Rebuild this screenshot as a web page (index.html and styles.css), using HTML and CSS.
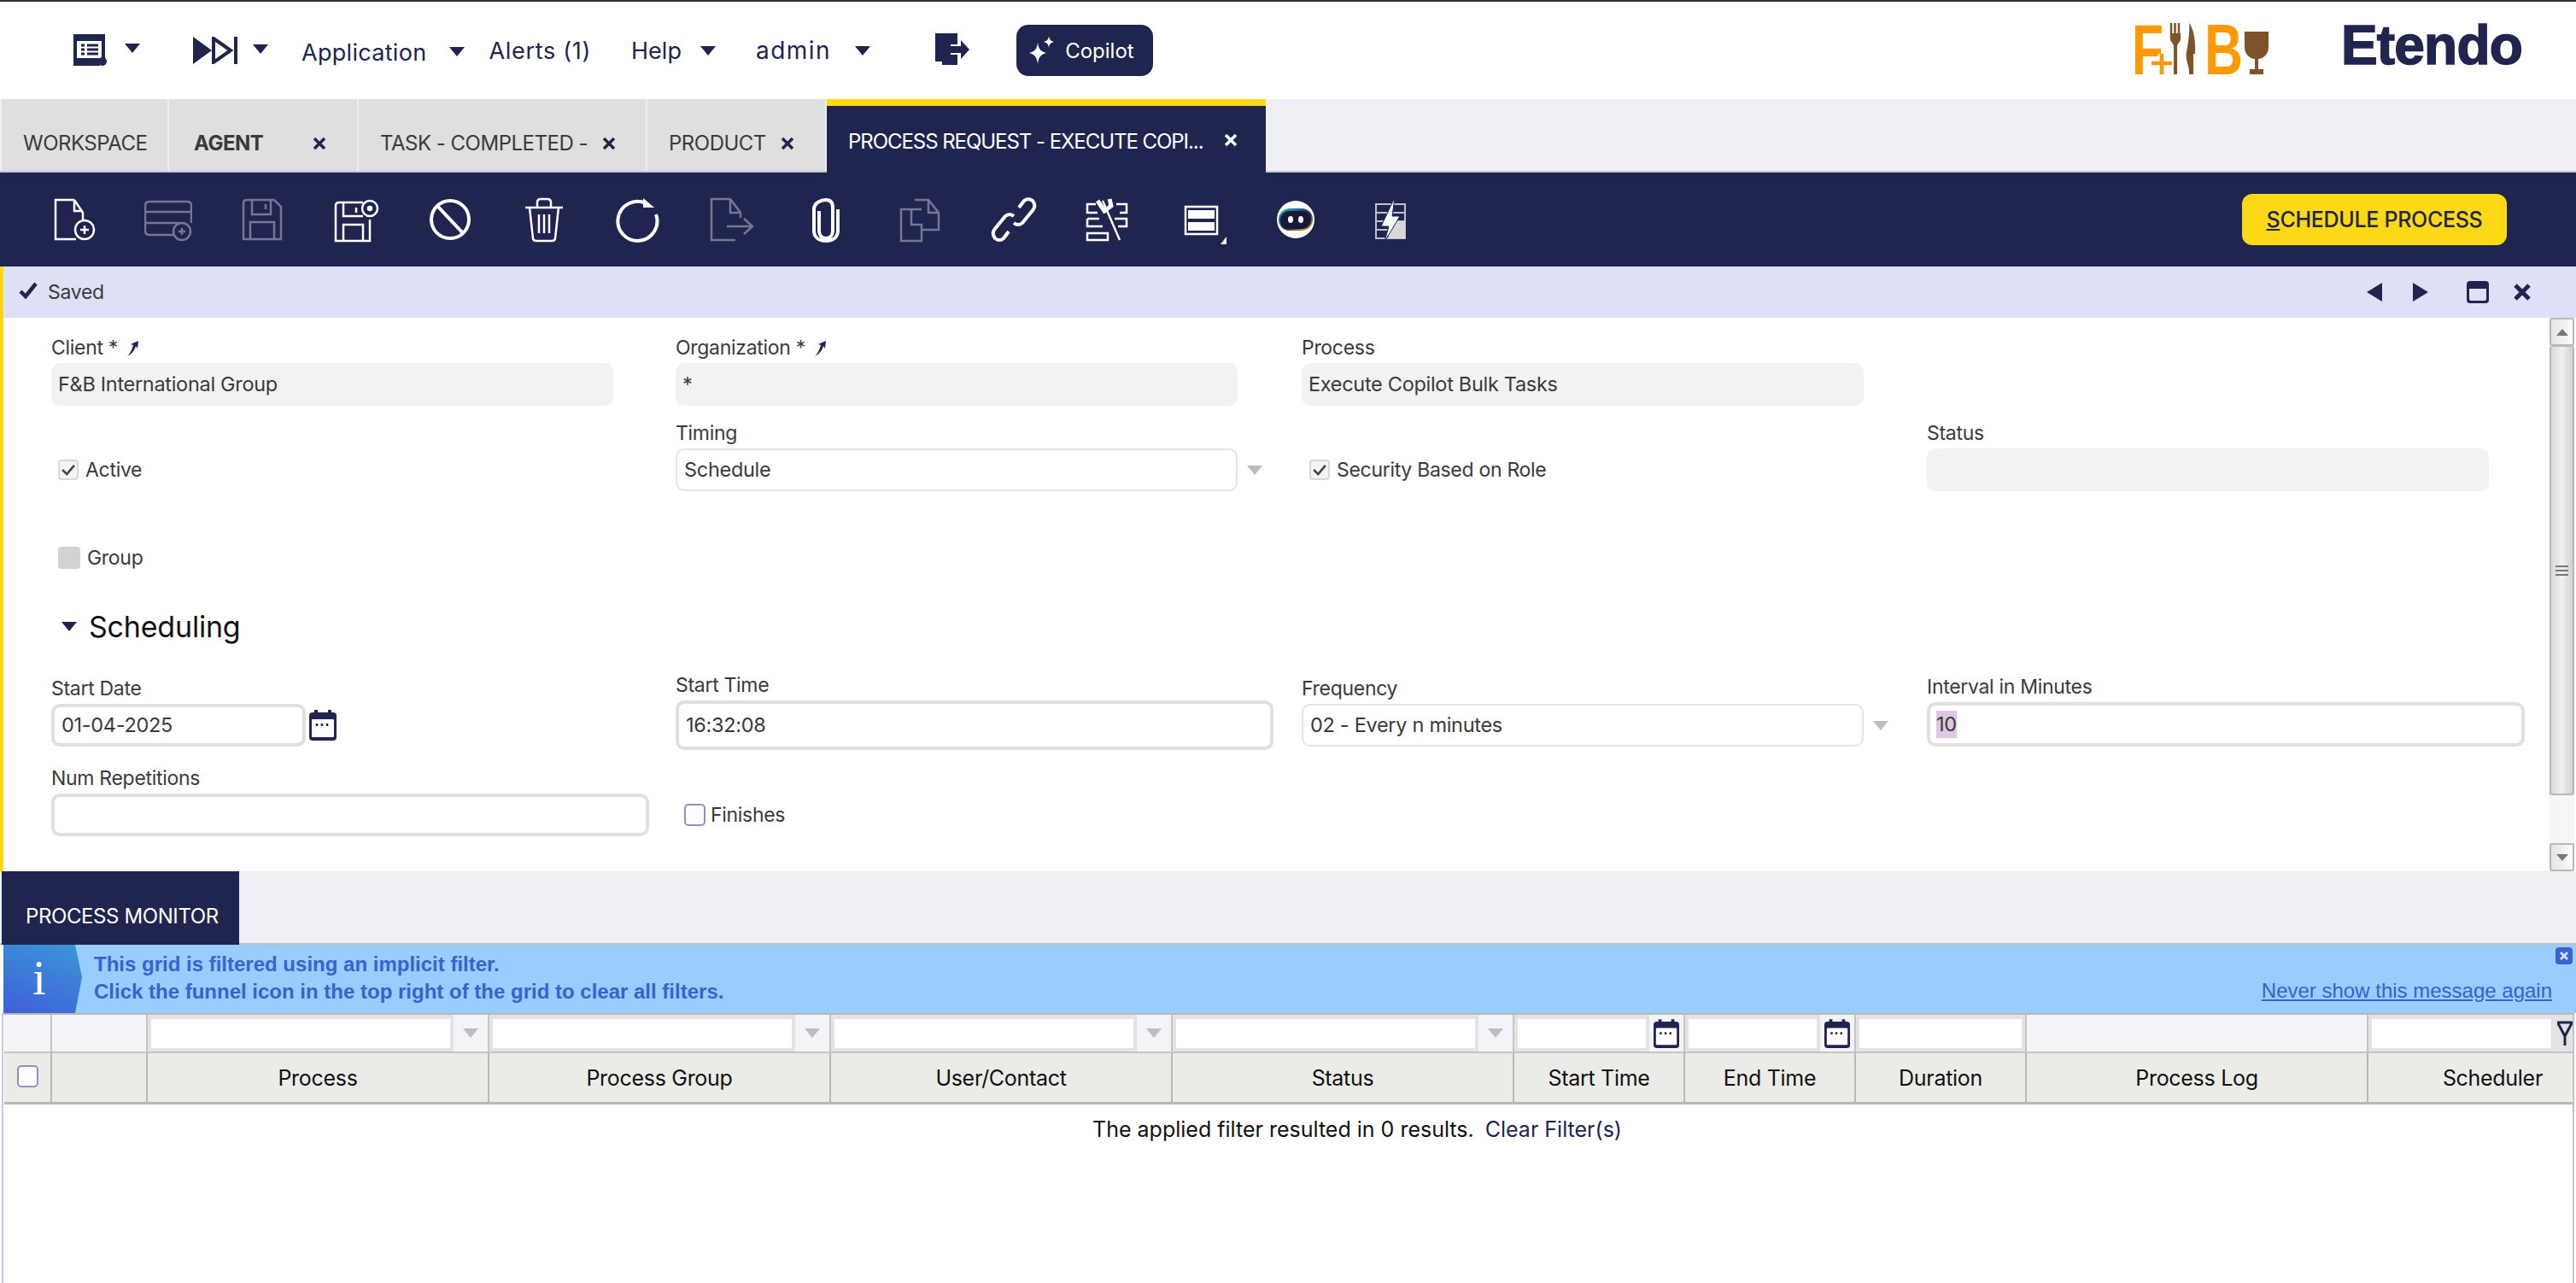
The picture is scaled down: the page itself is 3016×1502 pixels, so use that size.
FILE: index.html
```html
<!DOCTYPE html>
<html lang="en">
  <head>
    <meta charset="UTF-8" />
    <title>Process Request - Etendo</title>
    <link rel="stylesheet" href="styles.css">
  </head>
  <body>
    <header class="topbar">
      <svg class="ico-workspace" viewBox="0 0 44 40"><path d="M1 1H38V32H32V38H1Z" fill="#20254f"/><path d="M5 9H34V29H5Z" fill="#fff"/><path d="M10 14H14M17 14H30M10 19H14M17 19H30M10 24H14M17 24H30" stroke="#20254f" stroke-width="3"/><circle cx="35" cy="33" r="5" fill="#20254f"/></svg>
      <span class="arrow arrow-a"></span>
      <svg class="ico-skip" viewBox="0 0 54 32"><path d="M0 0L22 16L0 32Z" fill="#20254f"/><path d="M24 2L44 16L24 30Z" fill="none" stroke="#20254f" stroke-width="4"/><path d="M50 0V32" stroke="#20254f" stroke-width="4"/></svg>
      <span class="arrow arrow-b"></span>
      <span class="menu menu-app">Application</span>
      <span class="arrow arrow-c"></span>
      <span class="menu menu-alerts">Alerts (1)</span>
      <span class="menu menu-help">Help</span>
      <span class="arrow arrow-d"></span>
      <span class="menu menu-admin">admin</span>
      <span class="arrow arrow-e"></span>
      <svg class="ico-logout" viewBox="0 0 40 40"><path d="M0 1H26V14H18V26H26V38H8V34H0Z" fill="#20254f"/><path d="M18 16H30V9L40 20L30 31V24H18Z" fill="#20254f"/></svg>
      <button class="copilot">
        <svg viewBox="0 0 30 34"><path d="M10 8C11 15 13 18 20 20C13 22 11 25 10 33C9 25 7 22 0 20C7 18 9 15 10 8Z" fill="#fff"/><path d="M23 0C23.500 4 25 6 29 7C25 8 23.500 10 23 14C22.500 10 21 8 17 7C21 6 22.500 4 23 0Z" fill="#fff"/></svg>
        Copilot
      </button>
      <svg class="logo-fb" viewBox="0 0 160 60">
        <text class="logo-letter" x="0" y="60" textLength="37" lengthAdjust="spacingAndGlyphs">F</text>
        <text class="logo-letter" x="85" y="60" textLength="45" lengthAdjust="spacingAndGlyphs">B</text>
        <path d="M23 47H47M35 36V60" stroke="#fff" stroke-width="9"/>
        <path d="M23 47H47M35 36V60" stroke="#f90" stroke-width="4.500"/>
        <path d="M46 0V16M50.500 0V16M55 0V16" stroke="#7d532a" stroke-width="2.500"/>
        <path d="M45 12H57V20L53 26V60H49V26L45 20Z" fill="#7d532a"/>
        <path d="M67 0C72 6 75 20 74 36H72V60H67C68 50 62 44 64 34C66 24 68 10 67 0Z" fill="#7d532a"/>
        <path d="M132 10H160V28C160 38 152 42 148 42V54H154V60H138V54H144V42C140 42 132 38 132 28Z" fill="#7d532a"/>
      </svg>
      <div class="logo-etendo">Etendo</div>
    </header>

    <nav class="tabbar">
      <div class="tab tab-workspace">WORKSPACE</div>
      <div class="tab tab-agent"><b>AGENT</b><svg class="tab-x" viewBox="0 0 16 16"><path d="M2 2L14 14M14 2L2 14"/></svg></div>
      <div class="tab tab-task">TASK - COMPLETED -<svg class="tab-x" viewBox="0 0 16 16"><path d="M2 2L14 14M14 2L2 14"/></svg></div>
      <div class="tab tab-product">PRODUCT<svg class="tab-x" viewBox="0 0 16 16"><path d="M2 2L14 14M14 2L2 14"/></svg></div>
      <div class="tab tab-active">PROCESS REQUEST - EXECUTE COPI...<svg class="tab-x" viewBox="0 0 16 16"><path d="M2 2L14 14M14 2L2 14"/></svg></div>
    </nav>

    <div class="toolbar">
      <svg class="tool" viewBox="0 0 56 56"><path d="M28 5H6V51H30M28 5V18H36M28 5L38 20V28"/><circle cx="40" cy="40" r="11"/><path d="M40 35V45M35 40H45"/></svg>
      <svg class="tool tool-off" viewBox="0 0 56 56"><path d="M36 46H6Q1 46 1 41V12Q1 7 6 7H50Q55 7 55 12V32M1 19H55M1 32H41"/><circle cx="44" cy="42" r="10"/><path d="M44 38V46M40 42H48"/></svg>
      <svg class="tool tool-off" viewBox="0 0 56 56"><path d="M10 5H42L50 13V51H6V9Q6 5 10 5ZM16 5V22H38V5M32 10V16M14 51V31H42V51"/></svg>
      <svg class="tool" viewBox="0 0 56 56"><path d="M36 8H8Q4 8 4 12V53H44V28M13 8V24H36M28 14V20M13 53V34H36V53"/><circle cx="44" cy="15" r="9"/><circle cx="44" cy="15" r="2" class="dot"/></svg>
      <svg class="tool tool-bold" viewBox="0 0 56 56"><circle cx="28" cy="28" r="22"/><path d="M13 12L43 44"/></svg>
      <svg class="tool" viewBox="0 0 56 56"><path d="M6 14H50M20 14V8Q20 4 24 4H32Q36 4 36 8V14M11 14L15 50Q15 53 19 53H37Q41 53 41 50L45 14M22 22V44M28 22V44M34 22V44"/></svg>
      <svg class="tool tool-bold" viewBox="0 0 56 56"><path d="M37 9A23 23 0 1 0 49 22"/><path d="M34 3V14H47Z" class="solid"/></svg>
      <svg class="tool tool-off" viewBox="0 0 56 56"><path d="M26 4H4V52H32M26 4V20H36M26 4L38 20V26M22 36H50M42 27L52 36L42 45"/></svg>
      <svg class="tool tool-bold" viewBox="0 0 56 56"><path d="M20 18V41C20 46 23 50 28 50C33 50 36 46 36 41V14C36 8 33 5 28 5C23 5 14 8 14 16V41C14 49 20 53 28 53C36 53 42 49 42 41V16"/></svg>
      <svg class="tool tool-off" viewBox="0 0 56 56"><path d="M30 16H6V53H30V34H18V16M22 5H38L50 20V40H30M38 5V20H50"/></svg>
      <svg class="tool tool-bold" viewBox="0 0 56 56"><path d="M34 14L40 6Q45 2 50 6Q54 11 51 16L38 32Q33 36 28 32M22 42L16 50Q11 54 6 50Q2 45 5 40L18 24Q23 20 28 24"/></svg>
      <svg class="tool" viewBox="0 0 56 56"><path d="M14 10H4V20H16M38 10H50V20H42M4 27H18M36 27H50V36H40M4 27V36H22M4 44H28V52H4ZM22 6L42 52"/><path d="M16 6L24 18L32 12L30 4" class="thick"/></svg>
      <div class="tool-view">
        <svg class="tool" viewBox="0 0 56 56"><path d="M9 13H46V45H9Z"/><path d="M12 17H43V27H12ZM12 31H43V41H12Z" class="solid"/></svg>
        <span class="view-corner"></span>
      </div>
      <svg class="tool tool-plain" viewBox="0 0 56 56"><defs><linearGradient id="botring" x1="0" y1="0" x2="1" y2="1"><stop offset="0" stop-color="#22c7d8"/><stop offset=".55" stop-color="#20254f"/><stop offset="1" stop-color="#f5c518"/></linearGradient></defs><circle cx="28" cy="28" r="22" fill="#fff"/><rect x="8" y="15" width="40" height="26" rx="13" fill="url(#botring)"/><rect x="10" y="18" width="36" height="21" rx="10" fill="#161a38"/><ellipse cx="22" cy="28" rx="3" ry="4" fill="#fff"/><ellipse cx="34" cy="28" rx="3" ry="4" fill="#fff"/></svg>
      <svg class="tool tool-thin" viewBox="0 0 56 56"><path d="M12 10H46V50H12ZM12 20H46M12 30H46M12 40H46"/><path d="M32 30H46V50H26Z" class="shade"/><path d="M34 2L18 36H27L22 54L40 24H31Z" class="slash"/></svg>
      <button class="schedule"><u>S</u>CHEDULE PROCESS</button>
    </div>

    <div class="msgbar">
      <svg class="msg-check" viewBox="0 0 22 20"><path d="M2 11L8 17L20 2" /></svg>
      <span class="msg-text">Saved</span>
      <div class="msg-actions">
        <span class="tri-left"></span>
        <span class="tri-right"></span>
        <svg class="msg-max" viewBox="0 0 26 26"><path d="M0 4Q0 0 4 0H22Q26 0 26 4V22Q26 26 22 26H4Q0 26 0 22Z" fill="#20254f"/><path d="M3 9H23V21Q23 23 21 23H5Q3 23 3 21Z" fill="#dde0f6"/></svg>
        <svg class="msg-close" viewBox="0 0 22 22"><path d="M3 3L19 19M19 3L3 19"/></svg>
      </div>
    </div>

    <section class="form-wrap">
      <div class="form">
        <div class="form-row row-1">
          <div class="field"><label>Client * <svg class="pin" viewBox="0 0 18 20"><path d="M3 19C8 14 9 9 10 6L7 5L16 1L15 10L13 7C12 11 9 16 3 19Z" fill="#20254f"/></svg></label><div class="input readonly">F&amp;B International Group</div></div>
          <div class="field"><label>Organization * <svg class="pin" viewBox="0 0 18 20"><path d="M3 19C8 14 9 9 10 6L7 5L16 1L15 10L13 7C12 11 9 16 3 19Z" fill="#20254f"/></svg></label><div class="input readonly">*</div></div>
          <div class="field"><label>Process</label><div class="input readonly">Execute Copilot Bulk Tasks</div></div>
        </div>
        <div class="form-row row-2">
          <div class="check-cell"><span class="check check-on"><svg viewBox="0 0 14 14"><path d="M3 7L6 10L11 4"/></svg></span>Active</div>
          <div class="field"><label>Timing</label><div class="select-line"><div class="input editable">Schedule</div><span class="combo-arrow"></span></div></div>
          <div class="check-cell check-cell-sec"><span class="check check-on"><svg viewBox="0 0 14 14"><path d="M3 7L6 10L11 4"/></svg></span>Security Based on Role</div>
          <div class="field"><label>Status</label><div class="input readonly"></div></div>
        </div>
        <div class="form-row row-3">
          <div class="check-cell"><span class="check check-off"></span>Group</div>
        </div>
        <div class="section-head"><span class="section-arrow"></span>Scheduling</div>
        <div class="form-row row-4">
          <div class="field"><label>Start Date</label><div class="date-line"><div class="input focus date-input">01-04-2025</div><svg class="cal" viewBox="0 0 32 36"><path d="M8 0V5M24 0V5" stroke="#20254f" stroke-width="4"/><rect x="0" y="3" width="32" height="33" rx="4" fill="#20254f"/><rect x="3" y="11" width="26" height="21" rx="1" fill="#fff"/><path d="M9 16V19M15 16V19M21 16V19" stroke="#20254f" stroke-width="2.500"/></svg></div></div>
          <div class="field field-time"><label>Start Time</label><div class="input focus time-input">16:32:08</div></div>
          <div class="field"><label>Frequency</label><div class="select-line"><div class="input editable">02 - Every n minutes</div><span class="combo-arrow"></span></div></div>
          <div class="field field-interval"><label>Interval in Minutes</label><div class="input focus interval-input"><span class="selected">10</span></div></div>
        </div>
        <div class="form-row row-5">
          <div class="field"><label>Num Repetitions</label><div class="input focus"></div></div>
          <div class="check-cell check-cell-fin"><span class="check check-blue"></span>Finishes</div>
        </div>
      </div>
      <div class="scrollbar">
        <div class="sb-btn"><span class="sb-up"></span></div>
        <div class="sb-thumb"><span class="sb-grip"></span></div>
        <div class="sb-track"></div>
        <div class="sb-btn"><span class="sb-down"></span></div>
      </div>
    </section>

    <div class="subtabs"><div class="subtab">PROCESS MONITOR</div></div>

    <div class="info">
      <div class="info-icon">i</div>
      <div class="info-text">
        <div>This grid is filtered using an implicit filter.</div>
        <div>Click the funnel icon in the top right of the grid to clear all filters.</div>
      </div>
      <a class="info-link">Never show this message again</a>
      <svg class="info-close" viewBox="0 0 20 20"><rect width="20" height="20" rx="4" fill="#3b62cf"/><path d="M6 6L14 14M14 6L6 14" stroke="#cfe3ff" stroke-width="3"/></svg>
    </div>

    <div class="grid">
      <div class="grid-row filter-row">
        <div class="fcell"></div>
        <div class="fcell"></div>
        <div class="fcell fcell-input"><div class="finput"></div><span class="fbtn"><i class="combo-arrow"></i></span></div>
        <div class="fcell fcell-input"><div class="finput"></div><span class="fbtn"><i class="combo-arrow"></i></span></div>
        <div class="fcell fcell-input"><div class="finput"></div><span class="fbtn"><i class="combo-arrow"></i></span></div>
        <div class="fcell fcell-input"><div class="finput"></div><span class="fbtn"><i class="combo-arrow"></i></span></div>
        <div class="fcell fcell-input"><div class="finput"></div><span class="fbtn fbtn-cal"><svg class="cal" viewBox="0 0 32 36"><path d="M8 0V5M24 0V5" stroke="#20254f" stroke-width="4"/><rect x="0" y="3" width="32" height="33" rx="4" fill="#20254f"/><rect x="3" y="11" width="26" height="21" rx="1" fill="#fff"/><path d="M9 16V19M15 16V19M21 16V19" stroke="#20254f" stroke-width="2.500"/></svg></span></div>
        <div class="fcell fcell-input"><div class="finput"></div><span class="fbtn fbtn-cal"><svg class="cal" viewBox="0 0 32 36"><path d="M8 0V5M24 0V5" stroke="#20254f" stroke-width="4"/><rect x="0" y="3" width="32" height="33" rx="4" fill="#20254f"/><rect x="3" y="11" width="26" height="21" rx="1" fill="#fff"/><path d="M9 16V19M15 16V19M21 16V19" stroke="#20254f" stroke-width="2.500"/></svg></span></div>
        <div class="fcell fcell-input"><div class="finput"></div></div>
        <div class="fcell"></div>
        <div class="fcell fcell-input"><div class="finput"></div><svg class="funnel" viewBox="0 0 20 30"><path d="M1 2H19M2 3L10 18L18 3M10 18V29" fill="none" stroke="#20254f" stroke-width="3"/></svg></div>
      </div>
      <div class="grid-row head-row">
        <div class="hcell"><span class="check check-blue check-head"></span></div>
        <div class="hcell"></div>
        <div class="hcell">Process</div>
        <div class="hcell">Process Group</div>
        <div class="hcell">User/Contact</div>
        <div class="hcell">Status</div>
        <div class="hcell">Start Time</div>
        <div class="hcell">End Time</div>
        <div class="hcell">Duration</div>
        <div class="hcell">Process Log</div>
        <div class="hcell hcell-last">Scheduler</div>
      </div>
      <div class="grid-empty">The applied filter resulted in 0 results. <a>Clear Filter(s)</a></div>
    </div>
  </body>
</html>
```

FILE: styles.css
```css
* {
  margin: 0;
  padding: 0;
  box-sizing: border-box;
}

:root {
  --navy: #20254f;
  --yellow: #fcd815;
  --panel: #eff0f5;
  --text: #3a3a3a;
}

html,
body {
  width: 3016px;
  height: 1502px;
  overflow: hidden;
  background: #fff;
}

body {
  font-family: "Inter", "Noto Sans", sans-serif;
  font-size: 23px;
  color: var(--text);
  letter-spacing: -0.3px;
}

/* top bar */
.topbar {
  height: 116px;
  border-top: 2px solid #333;
  display: flex;
  align-items: center;
  color: var(--navy);
}

.ico-workspace {
  width: 44px;
  height: 40px;
  margin-left: 85px;
}

.ico-skip {
  width: 54px;
  height: 32px;
  margin-left: 62px;
}

.ico-logout {
  width: 40px;
  height: 40px;
  margin-left: 76px;
  margin-top: -2px;
}

.arrow {
  width: 0;
  height: 0;
  border-left: 9px solid transparent;
  border-right: 9px solid transparent;
  border-top: 11px solid var(--navy);
}

.arrow-a {
  margin-left: 17px;
  margin-top: -6px;
}

.arrow-b {
  margin-left: 16px;
  margin-top: -4px;
}

.arrow-c {
  margin-left: 27px;
  margin-top: 2px;
}

.arrow-d {
  margin-left: 22px;
}

.arrow-e {
  margin-left: 28px;
}

.menu {
  font-size: 27px;
  letter-spacing: 0;
}

.menu-app {
  margin-left: 39px;
  margin-top: 4px;
  letter-spacing: 0.3px;
}

.menu-alerts {
  margin-left: 28px;
  letter-spacing: 0.7px;
}

.menu-help {
  margin-left: 47px;
}

.menu-admin {
  margin-left: 47px;
  letter-spacing: 1.5px;
  font-size: 28px;
}

.copilot {
  width: 160px;
  height: 60px;
  margin-left: 55px;
  background: var(--navy);
  color: #fff;
  border: none;
  border-radius: 14px;
  font-family: inherit;
  font-size: 24px;
  letter-spacing: 0;
  display: flex;
  align-items: center;
  gap: 12px;
  padding-left: 15px;
}

.copilot svg {
  width: 30px;
  height: 34px;
}

.logo-fb {
  margin-left: auto;
  width: 160px;
  height: 60px;
  margin-top: -4px;
  overflow: visible;
}

.logo-letter {
  font-family: "Liberation Sans", sans-serif;
  font-weight: 700;
  font-size: 83px;
  fill: #f90;
  letter-spacing: 0;
}

.logo-etendo {
  margin-left: 85px;
  margin-right: 63px;
  font-family: "Liberation Sans", sans-serif;
  font-weight: 700;
  font-size: 64px;
  line-height: 64px;
  letter-spacing: -0.8px;
  -webkit-text-stroke: 1.5px var(--navy);
  color: var(--navy);
  margin-top: -12px;
}

/* document tabs */
.tabbar {
  height: 86px;
  display: flex;
  padding-left: 2px;
  background: var(--panel);
  border-bottom: 2px solid #c8c8cf;
}

.tab {
  height: 84px;
  background: #dfdfdf;
  border-right: 2px solid #eee;
  font-size: 24px;
  letter-spacing: -0.5px;
  display: flex;
  align-items: center;
  padding: 18px 0 0 25px;
  position: relative;
  white-space: nowrap;
}

.tab b {
  font-weight: 700;
  margin-left: 4px;
}

.tab-x {
  width: 16px;
  height: 16px;
  position: absolute;
  top: 44px;
  fill: none;
  stroke: var(--navy);
  stroke-width: 3.5;
}

.tab-workspace {
  width: 196px;
}

.tab-agent {
  width: 222px;
}

.tab-agent .tab-x {
  right: 36px;
}

.tab-task {
  width: 338px;
}

.tab-task .tab-x {
  right: 35px;
}

.tab-product {
  width: 210px;
}

.tab-product .tab-x {
  right: 36px;
}

.tab-active {
  width: 514px;
  height: 86px;
  background: var(--navy);
  border-top: 8px solid var(--yellow);
  border-right: none;
  color: #fff;
  padding-top: 4px;
  letter-spacing: -1.05px;
  z-index: 1;
}

.tab-active .tab-x {
  right: 33px;
  top: 32px;
  stroke: #fff;
}

/* toolbar */
.toolbar {
  height: 110px;
  background: var(--navy);
  display: flex;
  align-items: center;
  padding-left: 59px;
  gap: 54px;
}

.tool {
  width: 56px;
  height: 56px;
  fill: none;
  stroke: #fff;
  stroke-width: 2.5;
  flex: none;
}

.tool .solid {
  fill: #fff;
  stroke: none;
}

.tool .dot {
  fill: #fff;
}

.tool .thick {
  stroke-width: 5;
}

.tool .shade {
  fill: #d8d8d8;
  stroke: none;
}

.tool .slash {
  fill: #fff;
  stroke: var(--navy);
  stroke-width: 1;
}

.tool-off {
  opacity: 0.38;
}

.tool-bold {
  stroke-width: 4;
}

.tool-plain {
  stroke: none;
}

.tool-thin {
  stroke-width: 2;
  stroke: #bfc0cf;
}

.tool-view {
  position: relative;
  width: 56px;
  height: 56px;
  flex: none;
}

.view-corner {
  position: absolute;
  right: -1px;
  bottom: -1px;
  width: 0;
  height: 0;
  border-left: 7px solid transparent;
  border-bottom: 9px solid #fff;
}

.schedule {
  margin-left: auto;
  margin-right: 81px;
  width: 310px;
  height: 60px;
  background: var(--yellow);
  border: none;
  border-radius: 12px;
  font-family: inherit;
  font-size: 25px;
  letter-spacing: -0.3px;
  color: var(--navy);
  font-weight: 500;
}

/* message bar */
.msgbar {
  height: 60px;
  background: #dde0f6;
  border-left: 4px solid var(--yellow);
  display: flex;
  align-items: center;
  padding-left: 18px;
}

.msg-check {
  width: 22px;
  height: 20px;
  fill: none;
  stroke: var(--navy);
  stroke-width: 4.5;
  margin-top: -4px;
}

.msg-text {
  margin-left: 12px;
}

.msg-actions {
  margin-left: auto;
  margin-right: 52px;
  display: flex;
  align-items: center;
}

.tri-left {
  border-top: 11px solid transparent;
  border-bottom: 11px solid transparent;
  border-right: 18px solid var(--navy);
}

.tri-right {
  margin-left: 36px;
  border-top: 11px solid transparent;
  border-bottom: 11px solid transparent;
  border-left: 18px solid var(--navy);
}

.msg-max {
  width: 26px;
  height: 26px;
  margin-left: 45px;
}

.msg-close {
  width: 22px;
  height: 22px;
  margin-left: 28px;
  fill: none;
  stroke: var(--navy);
  stroke-width: 5;
}

/* form */
.form-wrap {
  height: 648px;
  border-left: 4px solid var(--yellow);
  display: flex;
}

.form {
  flex: 1;
  padding-left: 56px;
}

.form-row {
  display: grid;
  grid-template-columns: 731px 733px 732px 700px;
  align-items: end;
}

.row-1 {
  height: 103px;
}

.row-2 {
  height: 100px;
}

.row-3 {
  height: 103px;
}

.row-4 {
  height: 113px;
  padding-bottom: 2px;
  align-items: end;
}

.row-5 {
  height: 103px;
}

.field {
  display: flex;
  flex-direction: column;
  gap: 5px;
}

.field label {
  height: 26px;
  line-height: 26px;
  white-space: nowrap;
}

.pin {
  width: 18px;
  height: 20px;
  vertical-align: -3px;
  margin-left: 2px;
}

.input {
  width: 658px;
  height: 50px;
  border-radius: 10px;
  line-height: 46px;
  padding-left: 8px;
  font-size: 23.5px;
}

.readonly {
  background: #f2f2f2;
  line-height: 50px;
}

.editable {
  border: 2px solid #e4e4e4;
}

.focus {
  border: 4px solid #e0e0e0;
  width: 700px;
  line-height: 42px;
}

.date-input {
  width: 298px;
}

.time-input {
  height: 58px;
  line-height: 50px;
}

.field-time {
  margin-bottom: -4px;
}

.interval-input {
  height: 52px;
  line-height: 44px;
  padding-left: 7px;
}

.selected {
  background: #e0c6e2;
  display: inline-block;
  line-height: 32px;
}

.select-line,
.date-line {
  display: flex;
  align-items: center;
}

.combo-arrow {
  display: inline-block;
  width: 0;
  height: 0;
  border-left: 9px solid transparent;
  border-right: 9px solid transparent;
  border-top: 11px solid #bdbdbd;
}

.select-line .combo-arrow {
  margin-left: 11px;
}

.cal {
  width: 32px;
  height: 36px;
}

.date-line .cal {
  margin-left: 4px;
}

.check-cell {
  display: flex;
  align-items: center;
  gap: 8px;
  padding-left: 8px;
  height: 50px;
}

.check-cell-sec {
  padding-left: 9px;
}

.check-cell-fin {
  padding-left: 10px;
  gap: 6px;
}

.check {
  display: inline-block;
  width: 24px;
  height: 24px;
  border-radius: 4px;
  flex: none;
}

.check svg {
  display: block;
  width: 24px;
  height: 24px;
  fill: none;
  stroke: #444;
  stroke-width: 1.5;
}

.check-on {
  border: 2px solid #d6d6dc;
  background: #f4f4f6;
}

.check-on svg {
  margin: -2px;
}

.check-off {
  width: 26px;
  height: 26px;
  background: #d2d2d2;
}

.check-blue {
  width: 25px;
  height: 26px;
  border: 2px solid #8d92c4;
  border-radius: 5px;
  background: #fff;
}

.section-head {
  height: 60px;
  margin-top: 25px;
  display: flex;
  align-items: center;
  font-size: 34px;
  color: #111;
  padding-left: 12px;
  letter-spacing: -0.2px;
  gap: 14px;
}

.section-arrow {
  border-left: 9px solid transparent;
  border-right: 9px solid transparent;
  border-top: 11px solid var(--navy);
}

.scrollbar {
  width: 29px;
  margin-right: 2px;
  display: flex;
  flex-direction: column;
  background: #f6f6f6;
}

.sb-btn {
  height: 33px;
  background: linear-gradient(90deg, #e4e4e4, #fafafa);
  border: 2px solid #b8b8b8;
  border-radius: 3px;
  display: flex;
  align-items: center;
  justify-content: center;
}

.sb-up {
  border-left: 7px solid transparent;
  border-right: 7px solid transparent;
  border-bottom: 8px solid #777;
}

.sb-down {
  border-left: 7px solid transparent;
  border-right: 7px solid transparent;
  border-top: 8px solid #777;
}

.sb-thumb {
  height: 526px;
  background: linear-gradient(90deg, #d8d8d8, #f0f0f0 50%, #d0d0d0);
  border: 2px solid #b8b8b8;
  border-top-width: 1px;
  border-radius: 3px;
  display: flex;
  align-items: center;
  justify-content: center;
  padding-top: 4px;
}

.sb-grip {
  width: 15px;
  height: 15px;
  background: repeating-linear-gradient(180deg, #777 0 2px, transparent 2px 5px);
}

.sb-track {
  flex: 1;
}

/* child tab */
.subtabs {
  height: 86px;
  padding-left: 2px;
  background: var(--panel);
  border-bottom: 2px solid #c0c0c0;
}

.subtab {
  width: 278px;
  height: 86px;
  background: var(--navy);
  color: #fff;
  font-size: 24px;
  letter-spacing: -0.4px;
  padding: 38px 0 0 28px;
  line-height: 30px;
}

/* info message */
.info {
  height: 80px;
  margin-left: 4px;
  background: #99ccff;
  display: flex;
  align-items: center;
  position: relative;
  font-family: "Liberation Sans", sans-serif;
  letter-spacing: 0;
  color: #3763cf;
  font-size: 24px;
}

.info-icon {
  width: 92px;
  height: 80px;
  background: linear-gradient(20deg, #3f5fd8, #3c96d8);
  clip-path: polygon(0 0, 84px 0, 92px 38px, 84px 80px, 0 80px);
  color: #fff;
  font-family: "Liberation Serif", serif;
  font-size: 56px;
  line-height: 78px;
  text-align: center;
  padding-right: 8px;
  flex: none;
}

.info-text {
  margin-left: 14px;
  margin-top: -3px;
  font-weight: 700;
  line-height: 32px;
}

.info-link {
  margin-left: auto;
  margin-right: 28px;
  margin-top: 28px;
  text-decoration: underline;
}

.info-close {
  position: absolute;
  top: 3px;
  right: 4px;
  width: 20px;
  height: 20px;
}

/* grid */
.grid {
  height: 316px;
  margin-left: 2px;
  margin-right: 2px;
  border-left: 2px solid #c8c8e0;
  border-right: 2px solid #c4c4c4;
  border-top: 2px solid #b8b9b4;
  overflow: hidden;
}

.grid-row {
  display: grid;
  margin-left: 1px;
  grid-template-columns: 56px 112px 400px 400px 400px 400px 200px 200px 200px 400px 240px;
}

.filter-row {
  height: 45px;
  background: #f3f4f8;
  border-bottom: 2px solid #c4c5c0;
}

.fcell {
  border-right: 2px solid #c4c5c0;
  display: flex;
  min-width: 0;
}

.fcell-input {
  background: #e3e3e3;
  padding-top: 4px;
  height: 43px;
  align-items: stretch;
}

.fcell:last-child {
  border-right: none;
}

.finput {
  flex: 1;
  background: #fff;
  margin: 1px 4px 4px;
  min-width: 0;
}

.fbtn {
  width: 40px;
  margin-top: -4px;
  background: #f3f4f8;
  display: flex;
  align-items: center;
  justify-content: center;
  flex: none;
}

.fbtn-cal .cal {
  width: 30px;
  height: 34px;
}

.funnel {
  width: 20px;
  height: 30px;
  margin: 3px 0 0 2px;
  flex: none;
}

.head-row {
  height: 60px;
  background: #ebece8;
  border-bottom: 3px solid #b8b9b4;
}

.hcell {
  border-right: 2px solid #b8b9b4;
  display: flex;
  align-items: center;
  justify-content: center;
  color: #111;
  font-size: 25px;
  letter-spacing: -0.3px;
}

.hcell-last {
  border-right: none;
  justify-content: flex-end;
  padding-right: 36px;
}

.check-head {
  margin-top: -4px;
}

.grid-empty {
  text-align: center;
  padding-top: 14px;
  font-size: 25px;
  line-height: 30px;
  letter-spacing: 0;
  color: #111;
  padding-left: 162px;
}

.grid-empty a {
  color: var(--navy);
  margin-left: 6px;
}
```
